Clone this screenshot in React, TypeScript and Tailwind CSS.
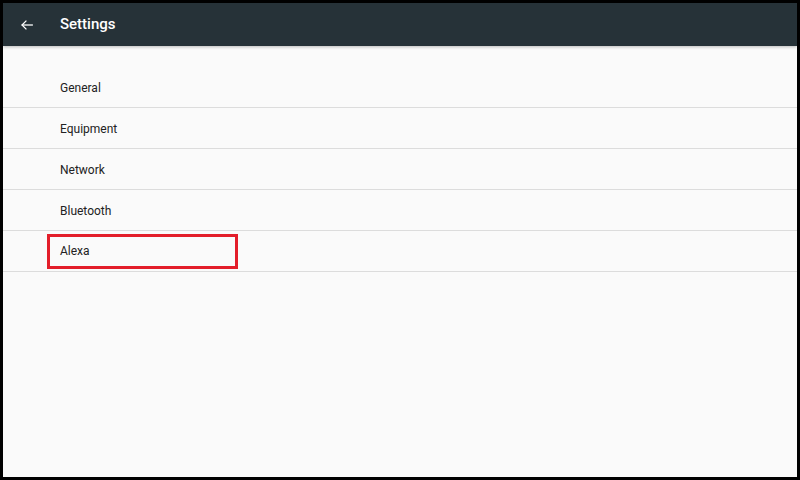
import React from "react";

const items = ["General", "Equipment", "Network", "Bluetooth", "Alexa"];

export default function App() {
  return (
    <div className="w-[800px] h-[480px] bg-black p-[3px]" style={{ fontFamily: "Roboto, 'Liberation Sans', sans-serif" }}>
      <div className="w-full h-full bg-[#fafafa] flex flex-col">
        <div className="h-[43px] bg-[#263238] flex items-center shadow-[0_1px_3px_rgba(0,0,0,0.25)] relative z-10">
          <div className="w-[57px] flex pl-[17px] pt-[1px]">
            <svg width="14" height="14" viewBox="0 0 24 24" fill="none" stroke="#ffffff" strokeWidth="2.2" strokeLinecap="square">
              <path d="M21 12H4" />
              <path d="M11 4.5L3.5 12L11 19.5" strokeLinecap="butt" />
            </svg>
          </div>
          <div className="text-white text-[15px] font-medium leading-none">Settings</div>
        </div>
        <div className="pt-[21px] flex flex-col">
          {items.map((it) => (
            <div key={it} className="h-[41px] border-b border-[#dcdcdc] flex items-center pl-[44px]">
              <div
                className={
                  it === "Alexa"
                    ? "w-[191px] h-[35px] border-[3px] border-[#e31e2a] flex items-center pl-[10px]"
                    : "pl-[13px]"
                }
              >
                <span className="text-[12px] text-[#222222]">{it}</span>
              </div>
            </div>
          ))}
        </div>
      </div>
    </div>
  );
}
